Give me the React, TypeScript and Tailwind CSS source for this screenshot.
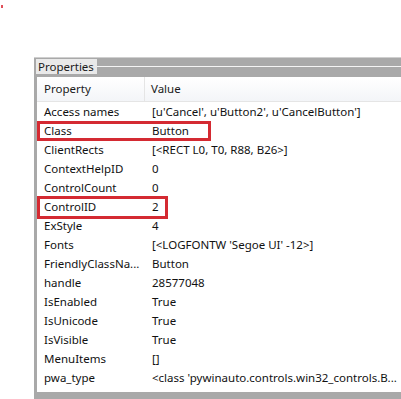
import React from "react";

const rows: [string, string][] = [
  ["Access names", "[u'Cancel', u'Button2', u'CancelButton']"],
  ["Class", "Button"],
  ["ClientRects", "[<RECT L0, T0, R88, B26>]"],
  ["ContextHelpID", "0"],
  ["ControlCount", "0"],
  ["ControlID", "2"],
  ["ExStyle", "4"],
  ["Fonts", "[<LOGFONTW 'Segoe UI' -12>]"],
  ["FriendlyClassNa...", "Button"],
  ["handle", "28577048"],
  ["IsEnabled", "True"],
  ["IsUnicode", "True"],
  ["IsVisible", "True"],
  ["MenuItems", "[]"],
  ["pwa_type", "<class 'pywinauto.controls.win32_controls.B..."],
  ["Rectangle", "(L972, T609, R1060, B716)"],
];

export default function App() {
  return (
    <div
      className="relative w-[401px] h-[399px] overflow-hidden bg-white"
      style={{ fontFamily: '"Noto Sans", "Open Sans", sans-serif' }}
    >
      <div className="flex pt-[5px] pl-[1px] h-[57px]">
        <div className="w-[2px] h-[3px] bg-[#e0505a]" />
      </div>
      <div className="ml-[34px] flex h-[342px] w-[367px] flex-col overflow-hidden border-t border-[#cfcfcf] bg-[#a9a9a9]">
        {/* top band */}
        <div className="flex h-[19px] shrink-0">
          <div className="ml-[2px] mt-[1px] h-[15px] whitespace-nowrap bg-[#e9e9e9] pl-[2px] pr-[3px] text-[11.5px] leading-[15px] text-[#1a1a1a]">
            Properties
          </div>
          <div className="flex flex-1 flex-col">
            <div className="h-[8px]" />
            <div className="h-[1px] bg-[#f4f4f4]" />
          </div>
        </div>
        {/* list view */}
        <div className="flex min-h-0 flex-1 pl-[3px] pb-[7px]">
          <div className="relative flex-1 overflow-hidden bg-white">
            <div className="flex h-[25px] border-b border-[#e5e5e5] bg-gradient-to-b from-[#ffffff] to-[#f3f5f8] text-[11.5px] text-[#1a1a1a]">
              <div className="flex w-[108px] items-center border-r border-[#e5e5e5] pl-[7px]">Property</div>
              <div className="flex items-center pl-[6px]">Value</div>
            </div>
            {rows.map(([k, v]) => (
              <div key={k} className="flex h-[19px] items-center whitespace-nowrap text-[11.5px] text-[#111]">
                <div className="w-[109px] pl-[7px]">{k}</div>
                <div className="pl-[6px]">{v}</div>
              </div>
            ))}
            <div className="absolute left-0 top-[44px] h-[20px] w-[174px] border-[3px] border-[#d42a32]" />
            <div className="absolute left-0 top-[119px] h-[23px] w-[131px] border-[3px] border-[#d42a32]" />
          </div>
        </div>
      </div>
    </div>
  );
}
